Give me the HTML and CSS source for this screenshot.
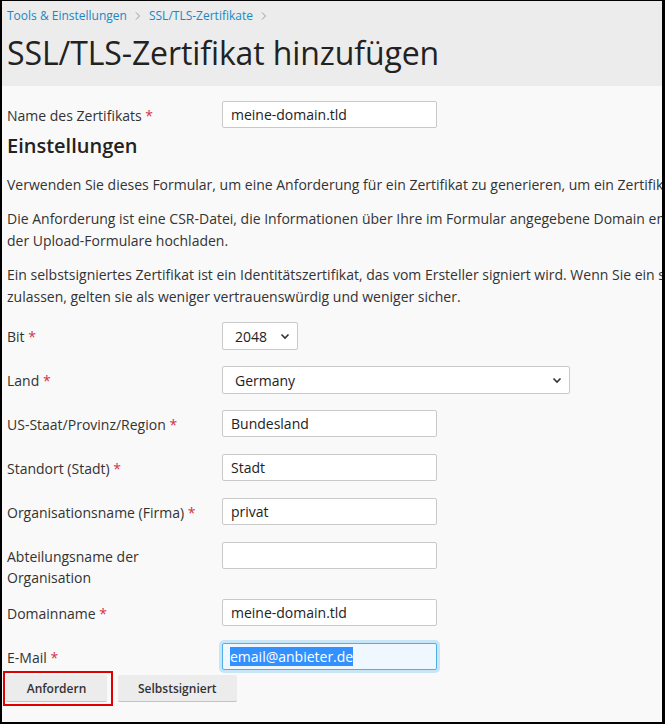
FILE: index.html
```html
<!DOCTYPE html>
<html lang="de">
<head>
<meta charset="utf-8">
<title>SSL/TLS-Zertifikat hinzufügen</title>
<link rel="stylesheet" href="styles.css">
</head>
<body>
<div class="frame">
  <header class="page-head">
    <nav class="crumbs">
      <a href="#">Tools &amp; Einstellungen</a>
      <span class="sep"><svg width="8" height="10" viewBox="0 0 8 10"><path d="M2 1.5 L5.5 5 L2 8.5" fill="none" stroke="#9a9a9a" stroke-width="1"/></svg></span>
      <a href="#">SSL/TLS-Zertifikate</a>
      <span class="sep"><svg width="8" height="10" viewBox="0 0 8 10"><path d="M2 1.5 L5.5 5 L2 8.5" fill="none" stroke="#9a9a9a" stroke-width="1"/></svg></span>
    </nav>
    <h1 class="title">SSL/TLS-Zertifikat hinzufügen</h1>
  </header>

  <main class="content">
    <div class="row">
      <label class="lbl">Name des Zertifikats <span class="req">*</span></label>
      <input class="field" type="text" value="meine-domain.tld">
    </div>

    <h2 class="section">Einstellungen</h2>

    <p class="hint">Verwenden Sie dieses Formular, um eine Anforderung für ein Zertifikat zu generieren, um ein Zertifikat zu kaufen oder um ein selbstsigniertes Zertifikat zu erstellen.</p>
    <p class="hint">Die Anforderung ist eine CSR-Datei, die Informationen über Ihre im Formular angegebene Domain enthält. Sie können das Zertifikat anschließend über eines<br>der Upload-Formulare hochladen.</p>
    <p class="hint">Ein selbstsigniertes Zertifikat ist ein Identitätszertifikat, das vom Ersteller signiert wird. Wenn Sie ein selbstsigniertes Zertifikat verwenden und Browser dies<br>zulassen, gelten sie als weniger vertrauenswürdig und weniger sicher.</p>

    <div class="form">
      <div class="row">
        <label class="lbl">Bit <span class="req">*</span></label>
        <div class="select small"><span>2048</span><svg width="10" height="7" viewBox="0 0 10 7"><path d="M1.5 1.5 L5 5 L8.5 1.5" fill="none" stroke="#333" stroke-width="1.6"/></svg></div>
      </div>
      <div class="row">
        <label class="lbl">Land <span class="req">*</span></label>
        <div class="select wide"><span>Germany</span><svg width="10" height="7" viewBox="0 0 10 7"><path d="M1.5 1.5 L5 5 L8.5 1.5" fill="none" stroke="#333" stroke-width="1.6"/></svg></div>
      </div>
      <div class="row">
        <label class="lbl">US-Staat/Provinz/Region <span class="req">*</span></label>
        <input class="field" type="text" value="Bundesland">
      </div>
      <div class="row">
        <label class="lbl">Standort (Stadt) <span class="req">*</span></label>
        <input class="field" type="text" value="Stadt">
      </div>
      <div class="row">
        <label class="lbl">Organisationsname (Firma) <span class="req">*</span></label>
        <input class="field" type="text" value="privat">
      </div>
      <div class="row">
        <label class="lbl">Abteilungsname der Organisation</label>
        <input class="field" type="text" value="">
      </div>
      <div class="row">
        <label class="lbl">Domainname <span class="req">*</span></label>
        <input class="field" type="text" value="meine-domain.tld">
      </div>
      <div class="row last">
        <label class="lbl">E-Mail <span class="req">*</span></label>
        <div class="field focused"><span class="sel">email@anbieter.de</span></div>
      </div>
    </div>

    <div class="actions">
      <span class="mark"><button class="btn" type="button">Anfordern</button></span>
      <button class="btn" type="button">Selbstsigniert</button>
    </div>
  </main>
</div>
</body>
</html>
```

FILE: styles.css
```css
html, body {
  margin: 0;
  padding: 0;
  background: #000;
}

.frame {
  width: 665px;
  height: 724px;
  box-sizing: border-box;
  border-style: solid;
  border-color: #000;
  border-width: 1px 3px 2px 2px;
  background: #f9f9f9;
  overflow: hidden;
  font-family: "Open Sans", "DejaVu Sans", sans-serif;
  color: #222;
}

.page-head {
  background: #ececec;
  padding: 5px 5px 0;
  height: 80px;
}

.crumbs {
  display: flex;
  align-items: center;
  gap: 6px;
  font-size: 12px;
  line-height: 20px;
}

.crumbs a {
  color: #1a87c4;
  text-decoration: none;
}

.crumbs .sep {
  display: flex;
  align-items: center;
  margin: 0 1px;
}

.title {
  margin: 5px 0 0;
  font-size: 32px;
  font-weight: 400;
  line-height: 44px;
  color: #222;
  letter-spacing: -0.1px;
}

.content {
  padding: 15px 5px 0;
  font-size: 14px;
}

.row {
  display: flex;
  align-items: flex-start;
  min-height: 44px;
  padding-bottom: 11px;
  box-sizing: border-box;
}

.content > .row {
  min-height: 0;
  padding-bottom: 0;
}

.lbl {
  width: 215px;
  flex: none;
  padding-top: 4px;
  line-height: 21px;
  color: #333;
  padding-right: 10px;
  box-sizing: border-box;
}

.req {
  color: #d4304b;
}

.field {
  width: 215px;
  height: 27px;
  box-sizing: border-box;
  border: 1px solid #c9c9c9;
  border-radius: 2px;
  background: #fff;
  padding: 0 8px;
  font-family: inherit;
  font-size: 14px;
  color: #222;
  margin: 0;
  outline: none;
  display: flex;
  align-items: center;
}

.field.focused {
  border-color: #4fb0e8;
  background: #eff8ff;
  box-shadow: 0 0 0 3px #c8e6f8;
  padding-left: 7px;
}

.sel {
  background: #3390ff;
  color: #fff;
  line-height: 19px;
}

.section {
  margin: 6px 0 0;
  font-size: 20px;
  font-weight: 600;
  line-height: 24px;
  color: #222;
}

.hint {
  margin: 16px 0 0;
  line-height: 22px;
  white-space: nowrap;
  color: #333;
}

.hint + .hint {
  margin-top: 12px;
}

.form {
  margin-top: 14px;
}

.select {
  height: 28px;
  box-sizing: border-box;
  border: 1px solid #c9c9c9;
  border-radius: 2px;
  background: #fff;
  display: flex;
  align-items: center;
  justify-content: space-between;
  padding: 0 7px 0 12px;
  color: #222;
}

.select.small {
  width: 76px;
}

.select.wide {
  width: 348px;
}

.row.last {
  min-height: 0;
  padding-bottom: 1px;
}

.actions {
  display: flex;
  align-items: center;
  gap: 5px;
  margin-left: -4px;
}

.mark {
  display: inline-flex;
  border: 2px solid #e00000;
  padding: 2px 4px 2px 1px;
}

.btn {
  height: 27px;
  box-sizing: border-box;
  border: none;
  border-bottom: 1px solid #c2c2c2;
  border-radius: 2px;
  background: #ececec;
  font-family: inherit;
  font-size: 12px;
  font-weight: 600;
  color: #333;
  padding: 0 20px;
  margin: 0;
}

.mark .btn {
  width: 101px;
}
```
